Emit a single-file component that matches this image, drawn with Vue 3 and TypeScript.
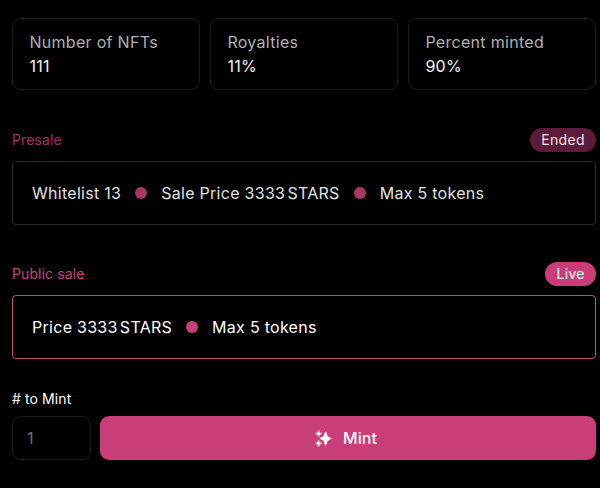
<script setup lang="ts">
import { ref } from 'vue'

interface Stat { label: string; value: string }
interface Phase { name: string; status: string; live: boolean; details: string[][] }

const stats: Stat[] = [
  { label: 'Number of NFTs', value: '111' },
  { label: 'Royalties', value: '11%' },
  { label: 'Percent minted', value: '90%' },
]

const phases: Phase[] = [
  { name: 'Presale', status: 'Ended', live: false, details: [['Whitelist 13'], ['Sale Price 3333', 'STARS'], ['Max 5 tokens']] },
  { name: 'Public sale', status: 'Live', live: true, details: [['Price 3333', 'STARS'], ['Max 5 tokens']] },
]

const amount = ref('')
</script>

<template>
  <main class="page">
    <section class="stats">
      <div v-for="s in stats" :key="s.label" class="stat">
        <span class="stat-label">{{ s.label }}</span>
        <span class="stat-value">{{ s.value }}</span>
      </div>
    </section>

    <section v-for="p in phases" :key="p.name" class="phase" :class="{ live: p.live }">
      <header class="phase-head">
        <span class="phase-name">{{ p.name }}</span>
        <span class="pill">{{ p.status }}</span>
      </header>
      <div class="phase-box">
        <template v-for="(d, i) in p.details" :key="i">
          <i v-if="i > 0" class="dot"></i>
          <span class="detail"><span v-for="part in d" :key="part">{{ part }}</span></span>
        </template>
      </div>
    </section>

    <form class="mint" @submit.prevent>
      <label class="mint-label" for="amount">
        # to Mint
      </label>
      <div class="mint-row">
        <input id="amount" v-model="amount" class="amount" type="text" placeholder="1" />
        <button class="mint-button" type="submit">
          <svg class="sparkles" viewBox="0 0 17 17" aria-hidden="true">
            <path d="M10.6 1.6 L12.5 6.6 L16.3 8.5 L12.5 10.4 L10.6 15.4 L8.7 10.4 L4.9 8.5 L8.7 6.6 Z" />
            <path class="star" d="M3.6 1.4V5.8M1.4 3.6H5.8M3.6 11.2V15.6M1.4 13.4H5.8" />
          </svg>
          <span>Mint</span>
        </button>
      </div>
    </form>
  </main>
</template>

<style>
body {
  background: #000;
}
</style>

<style scoped>
.page {
  box-sizing: border-box;
  height: 488px;
  padding: 18px 4px 0 12px;
  background: #000;
  color: #fff;
  font-family: Inter, "Liberation Sans", sans-serif;
  font-size: 16px;
  letter-spacing: 0.1px;
}
.stats {
  display: grid;
  grid-template-columns: repeat(3, 1fr);
  gap: 10px;
}
.stat {
  box-sizing: border-box;
  height: 72px;
  padding: 12px 16.4px;
  border: 1px solid #1e1e1e;
  border-radius: 9px;
  display: flex;
  flex-direction: column;
  line-height: 23.5px;
}
.stat-label {
  color: #b0b0b0;
  letter-spacing: 0.3px;
}
.stat-value {
  color: #f4f4f4;
  letter-spacing: 0.3px;
}
.phase {
  margin-top: 38px;
}
.phase.live {
  margin-top: 37px;
}
.phase-head {
  display: flex;
  align-items: center;
  justify-content: space-between;
  height: 24px;
  font-size: 14px;
}
.phase-name {
  color: #9c3260;
  line-height: 24px;
}
.live .phase-name {
  color: #cb417c;
}
.pill {
  padding: 0 11.2px 0 11.8px;
  border-radius: 12px;
  background: #5c1b3a;
  color: #eee3e8;
  line-height: 24px;
  letter-spacing: 0.3px;
}
.live .pill {
  background: #c93e79;
  color: #fff;
}
.phase-box {
  box-sizing: border-box;
  display: flex;
  align-items: center;
  gap: 14px;
  height: 64px;
  margin-top: 9px;
  padding: 0 19px;
  border: 1px solid #282828;
  border-radius: 4px;
  color: #e2e2e2;
  letter-spacing: 0.28px;
}
.live .phase-box {
  border-color: #c94b7c;
  color: #fff;
}
.detail {
  display: flex;
  gap: 2.2px;
  white-space: nowrap;
}
.dot {
  width: 12px;
  height: 12px;
  border-radius: 50%;
  background: #a63866;
}
.live .dot {
  background: #c93e79;
}
.mint {
  margin-top: 30px;
}
.mint-label {
  display: block;
  height: 20px;
  font-size: 14px;
  line-height: 20px;
}
.mint-row {
  display: flex;
  gap: 9px;
  margin-top: 7px;
}
.amount {
  box-sizing: border-box;
  width: 79px;
  height: 44px;
  padding: 0 14px;
  border: 1px solid #1e1e1e;
  border-radius: 9px;
  background: #000;
  color: #fff;
  font: inherit;
}
.amount::placeholder {
  color: #6f6f6f;
}
.mint-button {
  flex: 1;
  display: flex;
  align-items: center;
  justify-content: center;
  gap: 11px;
  height: 44px;
  padding: 0 4px 0 0;
  border: 0;
  border-radius: 9px;
  background: #c93e79;
  color: #fff;
  font: inherit;
  font-weight: 500;
  letter-spacing: 0.1px;
}
.sparkles {
  width: 17px;
  height: 17px;
  fill: #fff;
  stroke: #fff;
  stroke-width: 0.7;
  stroke-linejoin: round;
}
.star {
  stroke-width: 1.8;
  stroke-linecap: round;
}
</style>
